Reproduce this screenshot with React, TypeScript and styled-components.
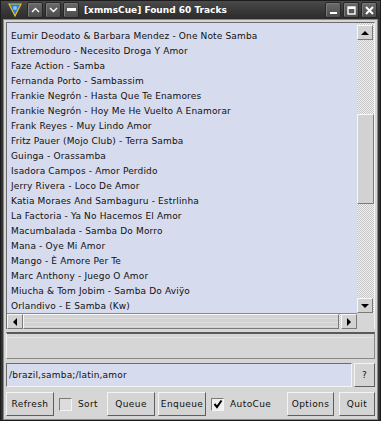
import React from 'react'
import styled, { createGlobalStyle } from 'styled-components'

const tracks = [
    'Eumir Deodato & Barbara Mendez - One Note Samba',
    'Extremoduro - Necesito Droga Y Amor',
    'Faze Action - Samba',
    'Fernanda Porto - Sambassim',
    'Frankie Negrón - Hasta Que Te Enamores',
    'Frankie Negrón - Hoy Me He Vuelto A Enamorar',
    'Frank Reyes - Muy Lindo Amor',
    'Fritz Pauer (Mojo Club) - Terra Samba',
    'Guinga - Orassamba',
    'Isadora Campos - Amor Perdido',
    'Jerry Rivera - Loco De Amor',
    'Katia Moraes And Sambaguru - Estrlinha',
    'La Factoria - Ya No Hacemos El Amor',
    'Macumbalada - Samba Do Morro',
    'Mana - Oye Mi Amor',
    'Mango - È Amore Per Te',
    'Marc Anthony - Juego O Amor',
    'Miucha & Tom Jobim - Samba Do Aviÿo',
    'Orlandivo - E Samba (Kw)',
]

const App = () => {
    return (
        <>
            <GlobalStyle />
            <Window>
                <TitleBar>
                    <AppIcon>
                        <svg width="16" height="16" viewBox="0 0 16 16">
                            <path d="M2 2 L14 2 L8 14 Z" fill="#2a7fd8" stroke="#e8c020" strokeWidth="1.2" />
                            <circle cx="8" cy="6" r="2" fill="#7fc4ff" />
                        </svg>
                    </AppIcon>
                    <TitleButton>
                        <svg width="9" height="6" viewBox="0 0 9 6"><path d="M1 5 L4.5 1.5 L8 5" stroke="#fff" strokeWidth="1.4" fill="none" /></svg>
                    </TitleButton>
                    <TitleButton>
                        <svg width="9" height="6" viewBox="0 0 9 6"><path d="M1 1 L4.5 4.5 L8 1" stroke="#fff" strokeWidth="1.4" fill="none" /></svg>
                    </TitleButton>
                    <TitleButton>
                        <svg width="9" height="4" viewBox="0 0 9 4"><rect x="0" y="0" width="9" height="3" fill="#fff" /></svg>
                    </TitleButton>
                    <Title>[xmmsCue] Found 60 Tracks</Title>
                    <TitleButton>
                        <svg width="9" height="9" viewBox="0 0 9 9"><rect x="1" y="6" width="7" height="2" fill="#fff" /></svg>
                    </TitleButton>
                    <TitleButton>
                        <svg width="9" height="9" viewBox="0 0 9 9"><rect x="1" y="1" width="7" height="7" stroke="#fff" strokeWidth="1.4" fill="none" /><rect x="1" y="1" width="7" height="2" fill="#fff" /></svg>
                    </TitleButton>
                    <TitleButton>
                        <svg width="9" height="9" viewBox="0 0 9 9"><path d="M1 1 L8 8 M8 1 L1 8" stroke="#fff" strokeWidth="2" /></svg>
                    </TitleButton>
                </TitleBar>
                <Body>
                    <ListFrame>
                        <List>
                            {tracks.map((t) => (
                                <Row key={t}>{t}</Row>
                            ))}
                        </List>
                        <VScroll>
                            <ArrowButton><Arrow $dir="up" /></ArrowButton>
                            <Track>
                                <VThumb style={{ marginTop: 74, height: 90 }} />
                            </Track>
                            <ArrowButton><Arrow $dir="down" /></ArrowButton>
                        </VScroll>
                        <HScroll>
                            <ArrowButton><Arrow $dir="left" /></ArrowButton>
                            <HTrack>
                                <HThumb style={{ width: 316 }} />
                            </HTrack>
                            <ArrowButton><Arrow $dir="right" /></ArrowButton>
                        </HScroll>
                        <Corner />
                    </ListFrame>
                    <InfoPanel />
                    <SearchRow>
                        <SearchInput defaultValue="/brazil,samba;/latin,amor" />
                        <Button $w={21}>?</Button>
                    </SearchRow>
                    <ButtonRow>
                        <Button $w={48}>Refresh</Button>
                        <Check>
                            <Box />
                            <span>Sort</span>
                        </Check>
                        <Button $w={48}>Queue</Button>
                        <Button $w={48}>Enqueue</Button>
                        <Check>
                            <Box $on>
                                <svg width="10" height="10" viewBox="0 0 10 10"><path d="M1.5 5 L4 8 L8.5 1.5" stroke="#000" strokeWidth="2" fill="none" /></svg>
                            </Box>
                            <span>AutoCue</span>
                        </Check>
                        <Spacer />
                        <RightGroup>
                            <Button $w={47}>Options</Button>
                            <Button $w={36}>Quit</Button>
                        </RightGroup>
                    </ButtonRow>
                </Body>
            </Window>
        </>
    )
}

export default App

const GlobalStyle = createGlobalStyle`
    html, body {
        margin: 0;
        padding: 0;
        background: #2b2b2b;
    }
`

const Window = styled.div`
    width: 381px;
    height: 421px;
    display: flex;
    flex-direction: column;
    background: #333;
    box-sizing: border-box;
    border: 1px solid #1c1c1c;
    font-family: "DejaVu Sans", sans-serif;
`

const TitleBar = styled.div`
    height: 22px;
    display: flex;
    align-items: center;
    gap: 2px;
    padding: 0 3px 0 4px;
    background: linear-gradient(#4a4a4a, #363636 60%, #2c2c2c);
`

const AppIcon = styled.div`
    width: 20px;
    height: 18px;
    display: flex;
    align-items: center;
    justify-content: center;
`

const TitleButton = styled.div`
    width: 16px;
    height: 16px;
    box-sizing: border-box;
    display: flex;
    align-items: center;
    justify-content: center;
    border: 1px solid #262626;
    border-radius: 2px;
    background: linear-gradient(#6a6a6a, #4c4c4c);
    box-shadow: inset 1px 1px 0 #7a7a7a;
`

const Title = styled.div`
    flex: 1;
    color: #fff;
    font-weight: bold;
    font-size: 9px;
    padding-left: 3px;
    white-space: nowrap;
`

const Body = styled.div`
    flex: 1;
    margin: 0 2px 4px 2px;
    background: #d6d6d6;
    display: flex;
    flex-direction: column;
    padding: 2px 2px 3px 2px;
    gap: 3px;
    border: 1px solid #888;
`

const ListFrame = styled.div`
    height: 306px;
    display: grid;
    grid-template-columns: 1fr 17px;
    grid-template-rows: 1fr 16px;
    border: 1px solid #6c6c6c;
    border-right-color: #f4f4f4;
    border-bottom: none;
`

const List = styled.div`
    background: #d7dbee;
    padding: 6px 0 0 4px;
    overflow: hidden;
`

const Row = styled.div`
    height: 15px;
    line-height: 15px;
    font-size: 9px;
    letter-spacing: 0.15px;
    color: #101010;
    white-space: nowrap;
`

const checker = `
    background: repeating-conic-gradient(#f2f2f2 0 25%, #c4c4c4 0 50%) 0 0 / 2px 2px;
`

const VScroll = styled.div`
    display: flex;
    flex-direction: column;
    ${checker}
    padding-top: 2px;
`

const Track = styled.div`
    flex: 1;
`

const bevel = `
    box-sizing: border-box;
    background: #d2d2d2;
    border: 1px solid;
    border-color: #f8f8f8 #7a7a7a #7a7a7a #f8f8f8;
`

const VThumb = styled.div`
    ${bevel}
    width: 100%;
`

const HScroll = styled.div`
    display: flex;
    ${checker}
    border-top: 1px solid #8a8a8a;
`

const HTrack = styled.div`
    flex: 1;
    display: flex;
`

const HThumb = styled.div`
    ${bevel}
    height: 100%;
    background: repeating-linear-gradient(#d2d2d2 0 3px, #dedede 3px 4px);
`

const Corner = styled.div`
    background: #d6d6d6;
`

const ArrowButton = styled.div`
    ${bevel}
    width: 16px;
    height: 15px;
    flex: none;
    display: flex;
    align-items: center;
    justify-content: center;
`

const arrowShapes: Record<string, string> = {
    up: 'border-width: 0 4px 4px 4px; border-color: transparent transparent #000 transparent;',
    down: 'border-width: 4px 4px 0 4px; border-color: #000 transparent transparent transparent;',
    left: 'border-width: 4px 4px 4px 0; border-color: transparent #000 transparent transparent;',
    right: 'border-width: 4px 0 4px 4px; border-color: transparent transparent transparent #000;',
}

const Arrow = styled.div<{ $dir: string }>`
    width: 0;
    height: 0;
    border-style: solid;
    ${(p) => arrowShapes[p.$dir]}
`

const InfoPanel = styled.div`
    height: 27px;
    border-top: 2px solid #5a5a5a;
    box-sizing: border-box;
    background: linear-gradient(#d6d6d6 0 3px, #e4e4e4 3px 4px, #d6d6d6 4px);
    border-left: 1px solid #f4f4f4;
    border-right: 1px solid #8a8a8a;
    border-bottom: 1px solid #8a8a8a;
`

const SearchRow = styled.div`
    display: flex;
    gap: 2px;
    height: 24px;
    margin-top: 1px;
`

const SearchInput = styled.input`
    flex: 1;
    box-sizing: border-box;
    height: 100%;
    background: #d7dbee;
    border: 1px solid;
    border-color: #6c6c6c #f4f4f4 #f4f4f4 #6c6c6c;
    font-family: "DejaVu Sans", sans-serif;
    font-size: 9px;
    letter-spacing: 0.2px;
    color: #101010;
    padding: 0 2px;
    outline: none;
`

const ButtonRow = styled.div`
    display: flex;
    align-items: center;
    gap: 3px;
    height: 24px;
    margin-top: 2px;
`

const RightGroup = styled.div`
    display: flex;
    gap: 5px;
`

const Button = styled.div<{ $w: number }>`
    ${bevel}
    width: ${(p) => p.$w}px;
    height: 24px;
    display: flex;
    align-items: center;
    justify-content: center;
    font-size: 9px;
    letter-spacing: 0.4px;
    color: #101010;
    border-color: #f4f4f4 #5e5e5e #5e5e5e #f4f4f4;
    background: #d4d4d4;
`

const Check = styled.label`
    display: flex;
    align-items: center;
    gap: 6px;
    padding: 0 6px 0 2px;
    font-size: 9px;
    letter-spacing: 0.4px;
    color: #101010;
`

const Box = styled.div<{ $on?: boolean }>`
    width: 13px;
    height: 13px;
    box-sizing: border-box;
    background: ${(p) => (p.$on ? '#f0f0f0' : '#dcdcdc')};
    border: 1px solid;
    border-color: #7a7a7a #f4f4f4 #f4f4f4 #7a7a7a;
    display: flex;
    align-items: center;
    justify-content: center;
`

const Spacer = styled.div`
    flex: 1;
`
